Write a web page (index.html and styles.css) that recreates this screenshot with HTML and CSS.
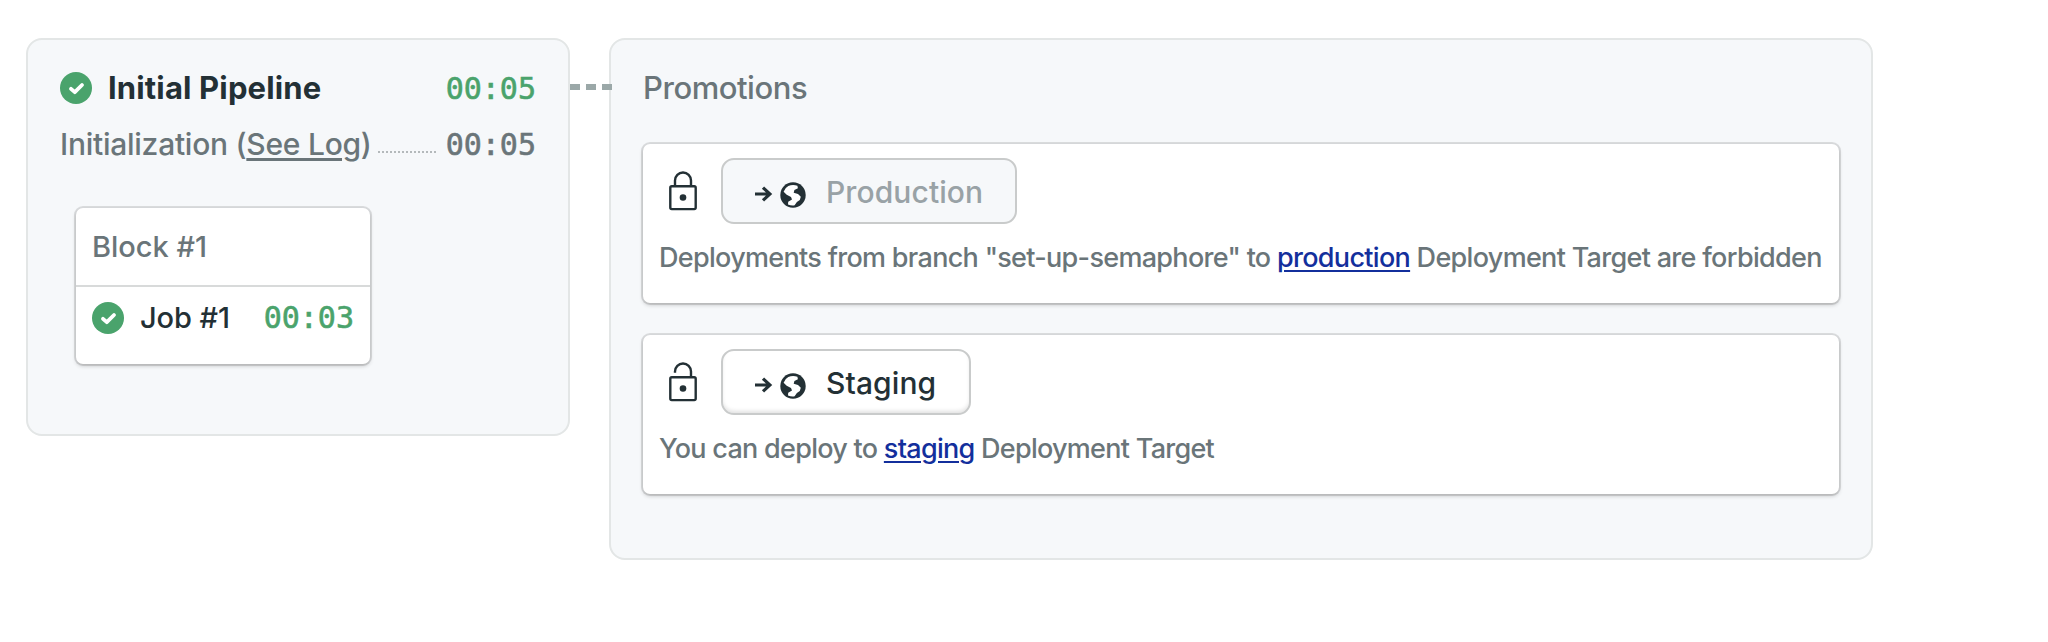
FILE: index.html
```html
<!DOCTYPE html>
<html lang="en">
<head>
<meta charset="utf-8">
<title>Initial Pipeline</title>
<link rel="stylesheet" href="styles.css">
</head>
<body>
<svg class="sprite" aria-hidden="true">
  <symbol id="passed" viewBox="0 0 32 32">
    <circle cx="16" cy="16" r="16" fill="#4aa36c"/>
    <path d="M11 16.8l3.8 3.4 7.2-7.2" fill="none" stroke="#fff" stroke-width="3.8" stroke-linecap="round" stroke-linejoin="round"/>
  </symbol>
  <symbol id="locked" viewBox="0 0 28 40">
    <path d="M6 15V9.5a8 8 0 0 1 16 0V15" fill="none" stroke="#233035" stroke-width="2.4"/>
    <rect x="1.3" y="15.3" width="25.4" height="22.8" rx="1.5" fill="none" stroke="#233035" stroke-width="2.4"/>
    <circle cx="14" cy="26.5" r="3.3" fill="#233035"/>
  </symbol>
  <symbol id="unlocked" viewBox="0 0 28 40">
    <path d="M6 10.8V9.5a8 8 0 0 1 16 0V15" fill="none" stroke="#233035" stroke-width="2.4"/>
    <rect x="1.3" y="15.3" width="25.4" height="22.8" rx="1.5" fill="none" stroke="#233035" stroke-width="2.4"/>
    <circle cx="14" cy="26.5" r="3.3" fill="#233035"/>
  </symbol>
  <symbol id="target" viewBox="0 0 52 28">
    <path d="M0 13h15M8 6.6l6.9 6.4L8 19.4" fill="none" stroke="#233035" stroke-width="3.2"/>
    <circle cx="38" cy="14" r="12.7" fill="#233035"/>
    <path d="M28.6 10.8Q30 6.8 33.3 5.1Q37.5 3.1 42.4 4.7L42.9 7.2 39.4 9 38.7 11.8 43 13 45.8 15.7 44.8 19 41.9 21 39.6 24.3Q36.4 24.9 33 23.5L33.2 20.8 37 18.4 36 16 31.7 13.7Z" fill="#fff"/>
  </symbol>
</svg>

<main class="workflow">
  <section class="panel pipeline">
    <header class="row">
      <svg class="status"><use href="#passed"/></svg>
      <h1 class="title">Initial Pipeline</h1>
      <span class="time passed">00:05</span>
    </header>
    <div class="row init">
      <span class="init-label">Initialization (<a class="log" href="#">See Log</a>)</span>
      <span class="leader"></span>
      <span class="time">00:05</span>
    </div>
    <article class="card block">
      <h2 class="block-name">Block #1</h2>
      <div class="row job">
        <svg class="status"><use href="#passed"/></svg>
        <span class="job-name">Job #1</span>
        <span class="time passed">00:03</span>
      </div>
    </article>
  </section>

  <div class="connector"></div>

  <section class="panel promotions">
    <h2 class="heading">Promotions</h2>
    <article class="card promotion">
      <div class="action">
        <svg class="lock"><use href="#locked"/></svg>
        <button class="promote production" disabled><svg class="target"><use href="#target"/></svg><span>Production</span></button>
      </div>
      <p class="note forbidden">Deployments from branch "set-up-semaphore" to <a href="#">production</a> Deployment Target are forbidden</p>
    </article>
    <article class="card promotion">
      <div class="action">
        <svg class="lock"><use href="#unlocked"/></svg>
        <button class="promote staging"><svg class="target"><use href="#target"/></svg><span>Staging</span></button>
      </div>
      <p class="note">You can deploy to <a href="#">staging</a> Deployment Target</p>
    </article>
  </section>
</main>
</body>
</html>
```
FILE: styles.css
```css
* { box-sizing: border-box; }
body {
  margin: 0;
  min-height: 642px;
  background: #fff;
  color: #6a7579;
  font-family: Inter, "Liberation Sans", sans-serif;
  font-weight: 450;
  white-space: nowrap;
}
h1, h2, p { margin: 0; font-weight: inherit; }
svg { display: block; flex: none; }
.sprite { position: absolute; width: 0; height: 0; }

.workflow { display: flex; align-items: flex-start; padding: 38px 0 0 26px; }
.panel {
  flex: none;
  padding: 32px;
  background: #f6f8fa;
  border: 2px solid #e3e6e6;
  border-radius: 16px;
}
.pipeline { width: 544px; height: 398px; }
.promotions { width: 1264px; height: 522px; }

.connector {
  position: relative;
  flex: none;
  width: 42px;
  height: 6px;
  margin: 46px -3px 0 0;
  background: repeating-linear-gradient(90deg, #9ba8a8 0 10px, transparent 10px 16px);
}

.row { display: flex; align-items: center; height: 32px; }
.status { width: 32px; height: 32px; }
.title {
  margin-left: 16px;
  color: #233035;
  font-size: 31px;
  font-weight: 650;
  line-height: 32px;
  letter-spacing: 0.15px;
}
.time {
  margin-left: auto;
  font: 30px/32px "DejaVu Sans Mono", monospace;
  -webkit-text-stroke: 0.6px currentColor;
}
.time.passed { color: #4aa36c; }
.row > .title + .time { padding-top: 2px; }

.init { margin-top: 24px; }
.init .time { margin-left: 0; padding-top: 1px; }
.init-label { font-size: 30px; line-height: 32px; letter-spacing: -0.26px; }
.log { color: inherit; text-decoration-thickness: 3px; text-underline-offset: 3px; }
.leader {
  flex: none;
  width: 60px;
  height: 2px;
  margin: 16px 8px 0 auto;
  background: repeating-linear-gradient(90deg, #b4b9bb 0 2px, transparent 2px 4px);
}

.card {
  background: #fff;
  border-radius: 7px;
  box-shadow: 0 0 0 2px rgba(0, 0, 0, .11), 0 2px 4px 0 rgba(0, 0, 0, .2);
}
.block { width: 294px; height: 156px; margin: 48px 0 0 16px; }
.block-name {
  height: 79px;
  padding-left: 16px;
  border-bottom: 2px solid #d8dada;
  font-size: 29px;
  line-height: 77px;
  letter-spacing: 0;
}
.job { margin: 15px 16px 0; }
.job-name { margin-left: 16px; color: #233035; font-size: 29px; line-height: 32px; letter-spacing: -0.1px; }

.heading { font-size: 31px; line-height: 32px; letter-spacing: -0.45px; margin-bottom: 40px; }
.promotion { height: 159px; padding: 14px 16px 0; }
.promotion + .promotion { margin-top: 32px; }
.action { display: flex; align-items: center; height: 66px; }
.lock { width: 28px; height: 40px; margin: 0 24px 0 10px; }
.promote {
  display: flex;
  align-items: center;
  height: 66px;
  padding: 2px 0 0 32px;
  background: #fff;
  border: 2px solid #c9cbcb;
  border-radius: 13px;
  box-shadow: inset 0 -3px 4px -1px rgba(0, 0, 0, .12);
  color: #233035;
  font: 450 30px/60px Inter, "Liberation Sans", sans-serif;
  letter-spacing: 0.1px;
}
.promote:disabled { background: #f6f8fa; box-shadow: none; color: #99a2a6; }
.production { width: 296px; }
.staging { width: 250px; }
.target { width: 52px; height: 28px; margin: 6px 19px 0 0; }
.note { margin-top: 16px; font-size: 27px; line-height: 36px; letter-spacing: -0.72px; }
.note.forbidden { letter-spacing: -0.69px; }
.note a { color: #132f9c; text-decoration-thickness: 2px; text-underline-offset: 3px; }
```
